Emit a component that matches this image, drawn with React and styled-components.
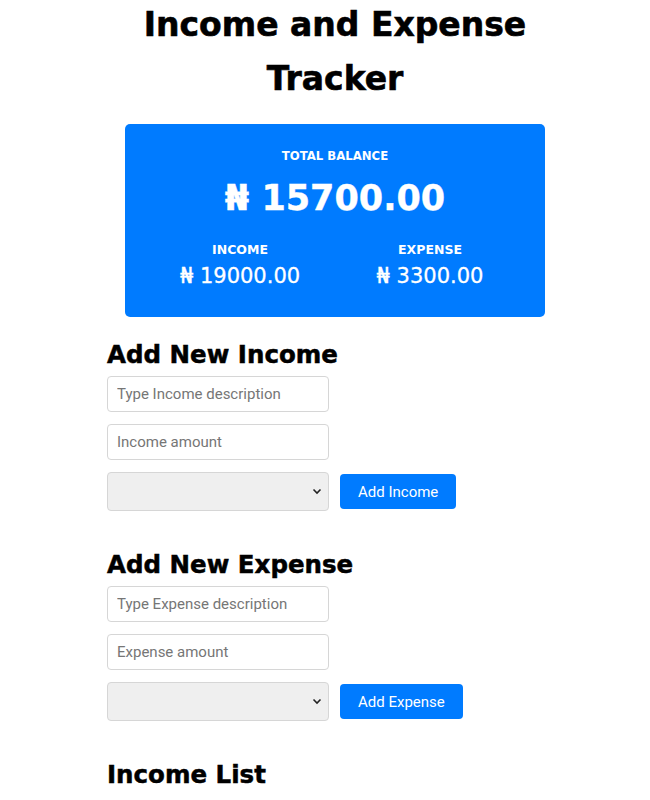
import React from "react";
import styled, { createGlobalStyle } from "styled-components";

const GlobalStyle = createGlobalStyle`
  html, body {
    margin: 0;
    padding: 0;
    background: #fff;
  }
  body {
    font-family: Roboto, "Liberation Sans", sans-serif;
  }
`;

const heading = `"DejaVu Sans", "Liberation Sans", sans-serif`;

const Page = styled.div`
  width: 630px;
  padding-left: 20px;
`;

const Title = styled.h1`
  margin: -2px 0 18px;
  font-family: ${heading};
  font-size: 33px;
  line-height: 54px;
  font-weight: 700;
  -webkit-text-stroke: 0.6px #000;
  text-align: center;
  color: #000;
`;

const Card = styled.div`
  width: 380px;
  margin: 0 auto;
  padding: 22px 20px 25px;
  background: #007bff;
  border-radius: 5px;
  color: #fff;
  font-family: ${heading};
  text-align: center;
`;

const Label = styled.div`
  font-size: ${(p) => (p.big ? "11.7px" : "12.5px")};
  font-weight: 700;
  text-transform: uppercase;
  line-height: 20px;
`;

const Balance = styled.div`
  font-size: 35px;
  font-weight: 700;
  line-height: 56px;
  margin: 4px 0 14px;
  -webkit-text-stroke: 0.4px #fff;
`;

const Row = styled.div`
  display: flex;
`;

const Col = styled.div`
  flex: 1;
`;

const Amount = styled.div`
  font-size: 21px;
  font-weight: 400;
  line-height: 32px;
  -webkit-text-stroke: 0.3px #fff;
`;

const Section = styled.div`
  width: 456px;
  margin: 0 auto;
`;

const SubTitle = styled.h3`
  margin: ${(p) => (p.first ? "17px" : "33px")} 0 0;
  font-family: ${heading};
  font-size: 24.5px;
  font-weight: 700;
  line-height: 42px;
  -webkit-text-stroke: 0.5px #000;
  color: #000;
`;

const Form = styled.div`
  display: flex;
  flex-direction: column;
  gap: 12px;
  align-items: flex-start;
`;

const Input = styled.input`
  box-sizing: border-box;
  width: 222px;
  height: 36px;
  padding: 0 9px;
  border: 1px solid #d6d6d6;
  border-radius: 4px;
  font-family: Roboto, sans-serif;
  font-size: 15px;
  color: #333;
  outline: none;

  &::placeholder {
    color: #767676;
  }
`;

const Line = styled.div`
  display: flex;
  align-items: center;
  gap: 11px;
`;

const SelectBox = styled.div`
  box-sizing: border-box;
  width: 222px;
  height: 39px;
  background: #efefef;
  border: 1px solid #d6d6d6;
  border-radius: 4px;
  display: flex;
  align-items: center;
  justify-content: flex-end;
  padding-right: 6px;
`;

const Button = styled.button`
  height: 35px;
  padding: 0 18px;
  background: #007bff;
  color: #fff;
  border: none;
  border-radius: 4px;
  font-family: Roboto, sans-serif;
  font-size: 15px;
  cursor: pointer;
`;

const Chevron = () => (
  <svg width="10" height="7" viewBox="0 0 10 7">
    <path d="M1.5 1.5 L5 5 L8.5 1.5" fill="none" stroke="#222" strokeWidth="1.6" />
  </svg>
);

const AddForm = ({ title, first, desc, amount, button }) => (
  <>
    <SubTitle first={first}>{title}</SubTitle>
    <Form>
      <Input placeholder={desc} />
      <Input placeholder={amount} />
      <Line>
        <SelectBox>
          <Chevron />
        </SelectBox>
        <Button>{button}</Button>
      </Line>
    </Form>
  </>
);

export default function App() {
  return (
    <Page>
      <GlobalStyle />
      <Title>
        Income and Expense
        <br />
        Tracker
      </Title>
      <Card>
        <Label big>Total Balance</Label>
        <Balance>₦ 15700.00</Balance>
        <Row>
          <Col>
            <Label>Income</Label>
            <Amount>₦ 19000.00</Amount>
          </Col>
          <Col>
            <Label>Expense</Label>
            <Amount>₦ 3300.00</Amount>
          </Col>
        </Row>
      </Card>
      <Section>
        <AddForm
          first
          title="Add New Income"
          desc="Type Income description"
          amount="Income amount"
          button="Add Income"
        />
        <AddForm
          title="Add New Expense"
          desc="Type Expense description"
          amount="Expense amount"
          button="Add Expense"
        />
        <SubTitle>Income List</SubTitle>
      </Section>
    </Page>
  );
}
